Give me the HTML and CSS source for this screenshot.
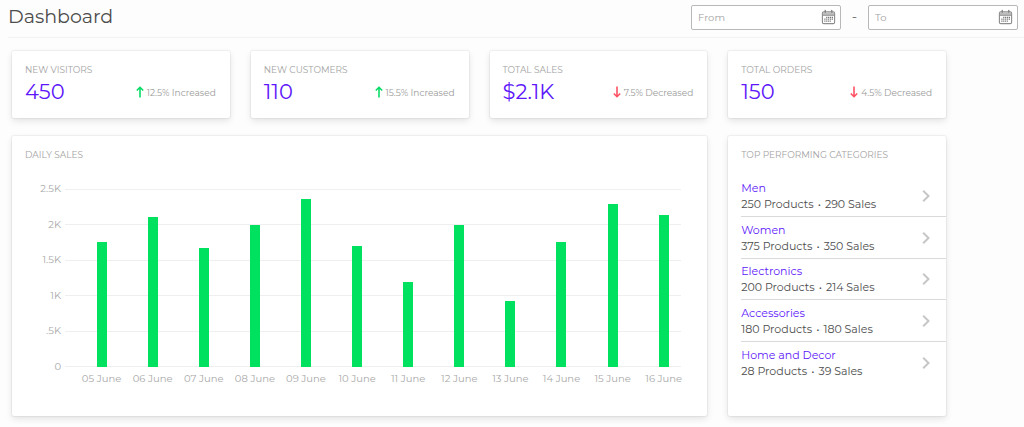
FILE: index.html
```html
<!DOCTYPE html>
<html lang="en">
<head>
<meta charset="utf-8">
<meta name="viewport" content="width=device-width, initial-scale=1">
<title>Dashboard</title>
<link rel="stylesheet" href="styles.css">
</head>
<body>
<svg class="sprite" aria-hidden="true">
  <symbol id="calendar" viewBox="0 0 16 16">
    <rect x="1.5" y="2.5" width="13" height="12.5" rx="1.5" fill="none" stroke="#8d8d8d" stroke-width="1.2"/>
    <path d="M2 3h12v3H2z" fill="#bdbdbd"/>
    <path d="M1.5 6.2h13" stroke="#8d8d8d"/>
    <path d="M4.5 .8v2M11.500 .8v2" stroke="#777" stroke-width="1.3" stroke-linecap="round"/>
    <path d="M5.500 8.300h7.500M3.500 10.300h9.500M3.500 12.300h7" stroke="#777" stroke-width="1.3" stroke-dasharray="1.3 .7"/>
  </symbol>
  <symbol id="up" viewBox="0 0 8 12">
    <path d="M4 11.500V1.500M.8 4.500 4 1.300l3.200 3.200" fill="none" stroke="#08dc67" stroke-width="1.600"/>
  </symbol>
  <symbol id="down" viewBox="0 0 8 12">
    <path d="M4 .5v10M.8 7.500 4 10.700l3.200-3.200" fill="none" stroke="#ff5264" stroke-width="1.600"/>
  </symbol>
  <symbol id="chevron" viewBox="0 0 8 12">
    <path d="M1.200 .8 6.500 6l-5.300 5.200" fill="none" stroke="#c6c6c6" stroke-width="2"/>
  </symbol>
</svg>

<header class="header">
  <h1 class="title">Dashboard</h1>
  <form class="range">
    <div class="date">
      <input class="date-input" type="text" placeholder="From" aria-label="From">
      <button class="date-button" type="button" aria-label="Pick start date"><svg class="calendar"><use href="#calendar"/></svg></button>
    </div>
    <span class="dash">-</span>
    <div class="date">
      <input class="date-input" type="text" placeholder="To" aria-label="To">
      <button class="date-button" type="button" aria-label="Pick end date"><svg class="calendar"><use href="#calendar"/></svg></button>
    </div>
  </form>
</header>

<main class="board">
  <section class="card stat">
    <h2 class="label">NEW VISITORS</h2>
    <div class="stat-row"><span class="value">450</span><span class="delta"><svg class="arrow"><use href="#up"/></svg>12.5% Increased</span></div>
  </section>
  <section class="card stat">
    <h2 class="label">NEW CUSTOMERS</h2>
    <div class="stat-row"><span class="value">110</span><span class="delta"><svg class="arrow"><use href="#up"/></svg>15.5% Increased</span></div>
  </section>
  <section class="card stat">
    <h2 class="label">TOTAL SALES</h2>
    <div class="stat-row"><span class="value">$2.1K</span><span class="delta"><svg class="arrow"><use href="#down"/></svg>7.5% Decreased</span></div>
  </section>
  <section class="card stat">
    <h2 class="label">TOTAL ORDERS</h2>
    <div class="stat-row"><span class="value">150</span><span class="delta"><svg class="arrow"><use href="#down"/></svg>4.5% Decreased</span></div>
  </section>

  <section class="card sales">
    <h2 class="label">DAILY SALES</h2>
    <div class="chart">
      <div class="scale"><span>2.5K</span><span>2K</span><span>1.5K</span><span>1K</span><span>.5K</span><span>0</span></div>
      <div class="lines"><i></i><i></i><i></i><i></i><i></i><i></i></div>
      <div class="bars">
        <i class="bar" style="height:70.4%"></i>
        <i class="bar" style="height:84.4%"></i>
        <i class="bar" style="height:66.9%"></i>
        <i class="bar" style="height:80%"></i>
        <i class="bar" style="height:94.4%"></i>
        <i class="bar" style="height:68%"></i>
        <i class="bar" style="height:47.5%"></i>
        <i class="bar" style="height:80%"></i>
        <i class="bar" style="height:37%"></i>
        <i class="bar" style="height:70%"></i>
        <i class="bar" style="height:91.6%"></i>
        <i class="bar" style="height:85.5%"></i>
      </div>
      <div class="days"><span>05 June</span><span>06 June</span><span>07 June</span><span>08 June</span><span>09 June</span><span>10 June</span><span>11 June</span><span>12 June</span><span>13 June</span><span>14 June</span><span>15 June</span><span>16 June</span></div>
    </div>
  </section>

  <section class="card top">
    <h2 class="label">TOP PERFORMING CATEGORIES</h2>
    <ul class="categories">
      <li class="category"><div><a class="name" href="#">Men</a><p class="detail">250 Products<span class="dot">•</span>290 Sales</p></div><svg class="chevron"><use href="#chevron"/></svg></li>
      <li class="category"><div><a class="name" href="#">Women</a><p class="detail">375 Products<span class="dot">•</span>350 Sales</p></div><svg class="chevron"><use href="#chevron"/></svg></li>
      <li class="category"><div><a class="name" href="#">Electronics</a><p class="detail">200 Products<span class="dot">•</span>214 Sales</p></div><svg class="chevron"><use href="#chevron"/></svg></li>
      <li class="category"><div><a class="name" href="#">Accessories</a><p class="detail">180 Products<span class="dot">•</span>180 Sales</p></div><svg class="chevron"><use href="#chevron"/></svg></li>
      <li class="category"><div><a class="name" href="#">Home and Decor</a><p class="detail">28 Products<span class="dot">•</span>39 Sales</p></div><svg class="chevron"><use href="#chevron"/></svg></li>
    </ul>
  </section>
</main>
</body>
</html>
```
FILE: styles.css
```css
* { box-sizing: border-box; }

body {
  margin: 0;
  background: #fdfdfd;
  color: #4d4d4d;
  font-family: Montserrat, Inter, sans-serif;
  font-size: 10px;
}

h1, h2, p, ul { margin: 0; padding: 0; font-weight: 400; }

.sprite { display: none; }

.header {
  display: flex;
  align-items: center;
  justify-content: space-between;
  height: 38px;
  margin-left: 8px;
  padding: 0 6px 3px 0;
  border-bottom: 1px solid #f3f3f3;
}

.title { font-size: 19px; line-height: 24px; }

.range { display: flex; align-items: center; }

.date {
  display: flex;
  align-items: center;
  width: 150px;
  height: 25px;
  padding: 0 4px 0 6px;
  border: 1px solid #b8b8b8;
  border-radius: 2px;
  background: #fff;
}

.date-input {
  flex: 1;
  min-width: 0;
  padding: 0;
  border: 0;
  outline: 0;
  background: none;
  color: #4d4d4d;
  font: inherit;
}

.date-input::placeholder { color: #a3a3a3; opacity: 1; }

.date-button { display: flex; padding: 0; border: 0; background: none; }

.calendar { width: 15px; height: 16px; }

.dash { width: 27px; text-align: center; font-size: 14px; color: #777; }

.board {
  display: grid;
  grid-template-columns: repeat(4, 1fr);
  gap: 18px 21px;
  padding: 13px 78px 10px 12px;
}

.card {
  background: #fff;
  border-radius: 2px;
  box-shadow: 0 0 1px 1px rgba(0, 0, 0, .05), 0 3px 7px rgba(0, 0, 0, .1);
}

.label { color: #a3a3a3; font-size: 9px; line-height: 12px; }

.stat { padding: 13px 14px 13px 13px; }

.stat-row {
  display: flex;
  align-items: center;
  justify-content: space-between;
  margin-top: 3px;
}

.value { color: #5e17fb; font-size: 21px; line-height: 26px; }

.delta {
  display: flex;
  align-items: center;
  gap: 3px;
  color: #999;
  font-size: 9px;
}

.arrow { width: 8px; height: 12px; }

.sales { grid-column: span 3; padding: 13px 26px 31px 13px; }

.chart {
  display: grid;
  grid-template-columns: 36px 1fr;
  grid-template-rows: 178px auto;
  column-gap: 4px;
  margin-top: 28px;
  color: #a9a9a9;
}

.scale, .lines {
  display: flex;
  flex-direction: column;
  justify-content: space-between;
}

.scale {
  margin: -6px 0;
  text-align: right;
  line-height: 12px;
}

.lines { grid-area: 1 / 2; }

.lines i { height: 1px; background: #efefef; }

.bars, .days {
  display: grid;
  grid-template-columns: repeat(12, 1fr);
  justify-items: center;
  margin: 0 -8px 0 11px;
}

.bars { grid-area: 1 / 2; align-items: end; }

.bar { width: 10px; background: #00e25f; }

.days { grid-column: 2; margin-top: 6px; line-height: 12px; white-space: nowrap; }

.top { display: flex; flex-direction: column; padding: 13px 0 33px 13px; }

.categories {
  display: flex;
  flex: 1;
  flex-direction: column;
  margin-top: 14px;
  list-style: none;
}

.category {
  display: flex;
  flex: 1;
  align-items: center;
  justify-content: space-between;
  padding: 1px 16px 0 0;
  border-bottom: 1px solid #dadada;
  font-size: 11px;
  line-height: 16px;
}

.category:last-child { border-bottom: 0; }

.name { display: block; color: #5e17fb; text-decoration: none; }

.dot { margin: 0 4px; font-size: 11px; }

.chevron { width: 8px; height: 12px; }
```
